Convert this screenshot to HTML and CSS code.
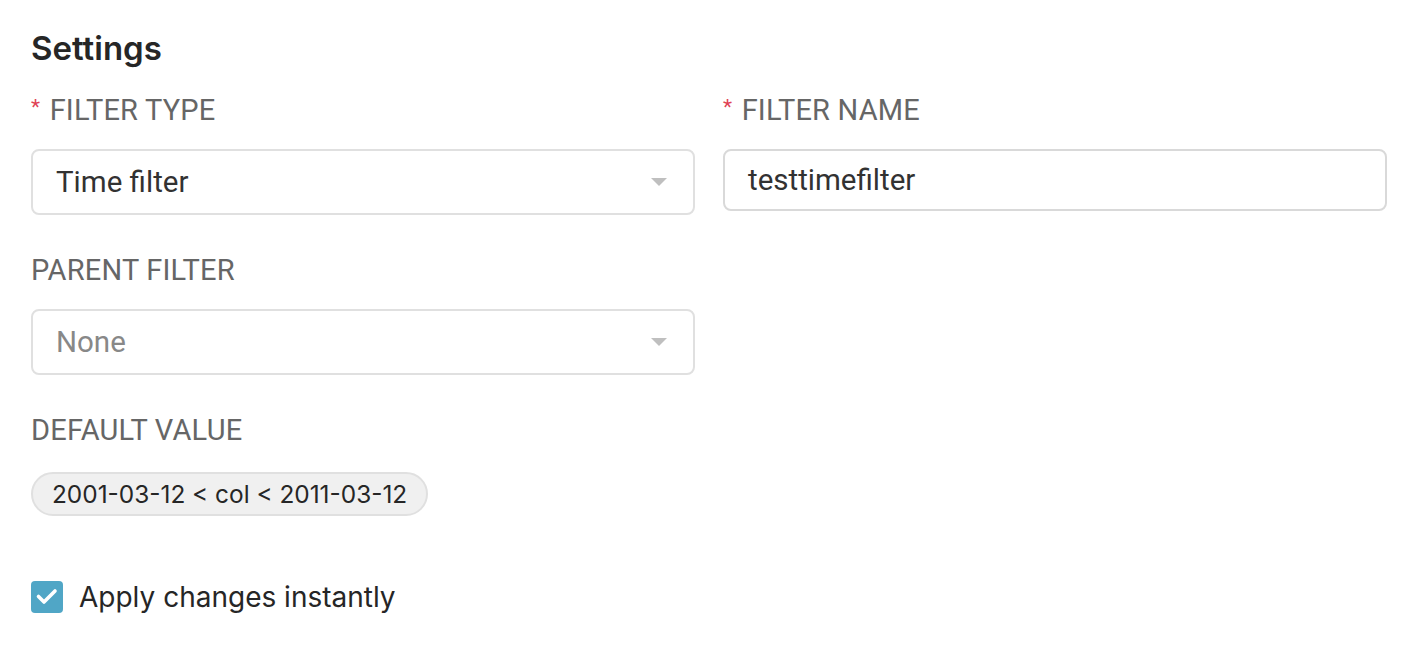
FILE: index.html
```html
<!DOCTYPE html>
<html>
<head>
<meta charset="utf-8">
<link rel="stylesheet" href="styles.css">
</head>
<body>
<div class="panel">
  <h2 class="title">Settings</h2>
  <div class="row">
    <div class="field">
      <div class="label"><span class="req">*</span> FILTER TYPE</div>
      <div class="select">
        <span class="value">Time filter</span>
        <span class="arrow"></span>
      </div>
    </div>
    <div class="field">
      <div class="label"><span class="req">*</span> FILTER NAME</div>
      <div class="input"><span class="value">testtimefilter</span></div>
    </div>
  </div>
  <div class="row">
    <div class="field">
      <div class="label">PARENT FILTER</div>
      <div class="select">
        <span class="value placeholder">None</span>
        <span class="arrow"></span>
      </div>
    </div>
    <div class="field"></div>
  </div>
  <div class="field single">
    <div class="label">DEFAULT VALUE</div>
    <div class="chip">2001-03-12 &lt; col &lt; 2011-03-12</div>
  </div>
  <label class="check">
    <span class="box">
      <svg width="32" height="32" viewBox="0 0 32 32"><path d="M7.5 15.5 L13 21 L24 10" fill="none" stroke="#fff" stroke-width="3.6" stroke-linecap="round" stroke-linejoin="round"/></svg>
    </span>
    <span class="check-text">Apply changes instantly</span>
  </label>
</div>
</body>
</html>
```

FILE: styles.css
```css
html, body {
  margin: 0;
  padding: 0;
  background: #fff;
}
.panel {
  padding: 26px 19px 0 31px;
  font-family: Roboto, "Liberation Sans", sans-serif;
}
.title {
  margin: 0 0 25px 0;
  font-family: Inter, "Liberation Sans", sans-serif;
  font-weight: 600;
  font-size: 33px;
  line-height: 44px;
  color: #262626;
}
.row {
  display: grid;
  grid-template-columns: 664px 664px;
  column-gap: 28px;
}
.field {
  margin-bottom: 40px;
}
.label {
  font-size: 29px;
  line-height: 30px;
  height: 30px;
  color: #666;
  margin-bottom: 24px;
  letter-spacing: 0.2px;
}
.req {
  color: #e04355;
  font-size: 21px;
  line-height: 0;
  vertical-align: 6px;
  margin-right: 2px;
}
.select, .input {
  box-sizing: border-box;
  height: 66px;
  border: 2px solid #e0e0e0;
  border-radius: 8px;
  display: flex;
  align-items: center;
  padding: 0 26px 0 23px;
  justify-content: space-between;
}
.input {
  height: 62px;
  border-color: #d9d9d9;
}
.value {
  font-size: 29.5px;
  color: #323232;
}
.placeholder {
  color: #888;
}
.arrow {
  width: 0;
  height: 0;
  border-left: 8px solid transparent;
  border-right: 8px solid transparent;
  border-top: 8px solid #bfbfbf;
}
.single {
  margin-bottom: 64px;
}
.single .label {
  margin-bottom: 27px;
}
.chip {
  display: inline-block;
  box-sizing: border-box;
  height: 44px;
  line-height: 40px;
  padding: 0 19px;
  border: 2px solid #e0e0e0;
  border-radius: 22px;
  background: #f0f0f0;
  font-family: Inter, "Liberation Sans", sans-serif;
  font-size: 24.4px;
  color: #262626;
}
.check {
  display: flex;
  align-items: center;
  gap: 16px;
}
.box {
  width: 32px;
  height: 32px;
  border-radius: 4px;
  background: #50a6c6;
  display: flex;
}
.check-text {
  font-family: Inter, "Liberation Sans", sans-serif;
  font-size: 28px;
  color: #262626;
}
```
